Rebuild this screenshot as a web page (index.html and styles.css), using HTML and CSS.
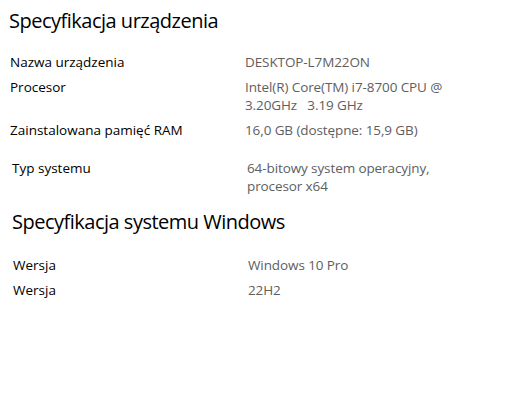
FILE: index.html
```html
<!DOCTYPE html>
<html lang="pl">
<head>
<meta charset="utf-8">
<title>Specyfikacja</title>
<link rel="stylesheet" href="styles.css">
</head>
<body>
<main class="page">
  <section class="device">
    <h1 class="title">Specyfikacja urządzenia</h1>
    <dl class="specs">
      <dt>Nazwa urządzenia</dt><dd>DESKTOP-L7M22ON</dd>
      <dt>Procesor</dt><dd>Intel(R) Core(TM) i7-8700 CPU @<br>3.20GHz&nbsp;&nbsp;&nbsp;3.19 GHz</dd>
      <dt>Zainstalowana pamięć RAM</dt><dd>16,0 GB (dostępne: 15,9 GB)</dd>
    </dl>
  </section>
  <section class="systype">
    <dl class="specs">
      <dt>Typ systemu</dt><dd>64-bitowy system operacyjny,<br>procesor x64</dd>
    </dl>
  </section>
  <section class="windows">
    <h2 class="title">Specyfikacja systemu Windows</h2>
    <dl class="specs">
      <dt>Wersja</dt><dd>Windows 10 Pro</dd>
      <dt>Wersja</dt><dd>22H2</dd>
    </dl>
  </section>
</main>
</body>
</html>
```
FILE: styles.css
```css
html, body {
  margin: 0;
  background: #ffffff;
}
body {
  font-family: "Open Sans", "Noto Sans", "Liberation Sans", sans-serif;
  color: #000000;
}
.page {
  padding: 8px 0 0 10px;
}
.title {
  margin: 0;
  font-size: 20px;
  font-weight: 400;
  line-height: 26px;
  letter-spacing: -0.5px;
  color: #000;
}
.device .title {
  margin-left: -1px;
}
.specs {
  margin: 0;
  display: grid;
  grid-template-columns: 235px 1fr;
  row-gap: 6.5px;
  font-size: 13.5px;
  line-height: 18.5px;
}
.specs dt {
  margin: 0;
  color: #000;
}
.specs dd {
  margin: 0;
  color: #5e5e5e;
  letter-spacing: -0.1px;
}
.device .specs {
  margin-top: 18.5px;
}
.systype {
  margin-top: 19.25px;
  padding-left: 2px;
}
.windows {
  padding-left: 2px;
}
.windows .title {
  margin-top: 13.25px;
}
.windows .specs {
  margin-top: 20.75px;
  padding-left: 1px;
}
```
